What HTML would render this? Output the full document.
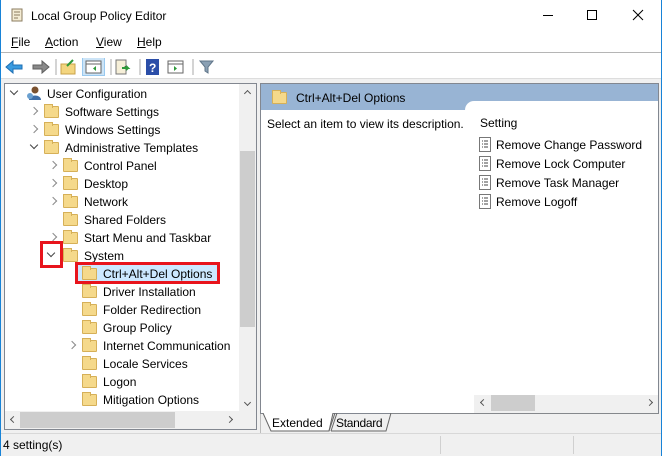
<!DOCTYPE html>
<html><head><meta charset="utf-8"><style>
*{margin:0;padding:0;box-sizing:border-box}
body{width:662px;height:456px;overflow:hidden;background:#f0f0f0;font-family:"Liberation Sans",sans-serif;font-size:12px;color:#000;position:relative}
.a{position:absolute}
.win{left:0;top:0;width:662px;height:456px;border:1px solid #1883d7;border-bottom:none}
.t{white-space:nowrap;line-height:14px}
.fold{position:absolute;width:15px;height:12px;background:#f5d98b;border:1px solid #d6b058;border-radius:1px}
.fold:before{content:"";position:absolute;left:-1px;top:-3px;width:7px;height:3px;background:#f5d98b;border:1px solid #d6b058;border-bottom:none}
.chev{position:absolute;width:6px;height:6px;border-right:1.5px solid #8a8a8a;border-bottom:1.5px solid #8a8a8a}
.r{transform:rotate(-45deg)}
.d{transform:rotate(45deg);border-color:#444}
</style></head><body>
<div class="a win"></div>
<div class="a" style="left:1px;top:0;width:660px;height:31px;background:#fff"></div>
<svg class="a" style="left:9px;top:7px" width="16" height="16"><path d="M3 2h10v12H3z" fill="#f4ecd4" stroke="#8b7d60"/><path d="M5 5h6M5 8h6M5 11h4" stroke="#8b7d60"/></svg>
<div class="a t" style="left:31px;top:9px;font-size:12px">Local Group Policy Editor</div>
<div class="a" style="left:543px;top:15px;width:10px;height:1px;background:#000"></div>
<div class="a" style="left:587px;top:10px;width:10px;height:10px;border:1px solid #000"></div>
<svg class="a" style="left:632px;top:9px" width="12" height="12"><path d="M1 1L11 11M11 1L1 11" stroke="#000"/></svg>
<div class="a" style="left:1px;top:31px;width:660px;height:22px;background:#fff;border-bottom:1px solid #b5b5b5"></div>
<div class="a t" style="left:11px;top:35px"><u>F</u>ile</div>
<div class="a t" style="left:45px;top:35px"><u>A</u>ction</div>
<div class="a t" style="left:96px;top:35px"><u>V</u>iew</div>
<div class="a t" style="left:137px;top:35px"><u>H</u>elp</div>
<div class="a" style="left:1px;top:53px;width:660px;height:26px;background:#fff;border-bottom:1px solid #ddd"></div>
<svg class="a" style="left:5px;top:58px" width="210" height="18">
<path d="M1 9l7-6v4h9v4H8v4z" fill="#3a9be0" stroke="#1e6fb3"/>
<path d="M44 9l-7-6v4h-9v4h9v4z" fill="#8a8a8a" stroke="#5f5f5f"/>
<path d="M51 1v16" stroke="#aaa"/>
<path d="M56 6h14v10H56z" fill="#f3d57f" stroke="#c8a24a"/><path d="M62 8l6-6" stroke="#2e9a3a" stroke-width="2"/>
<rect x="77.5" y="-0.5" width="22" height="18" fill="#cce4f7" stroke="#99c9ef"/>
<path d="M81 3h15v12H81z" fill="#fff" stroke="#666"/><path d="M81 6h15" stroke="#666"/><path d="M91 8v5l-3-2.5z" fill="#2e9a3a"/>
<path d="M106 1v16" stroke="#aaa"/>
<path d="M111 2h10v14h-10z" fill="#f6efd8" stroke="#777"/><path d="M117 10h6l-2-2m2 2l-2 2" stroke="#2e9a3a" stroke-width="2"/>
<path d="M135 1v16" stroke="#aaa"/>
<rect x="141" y="1" width="13" height="16" fill="#2b4ea8"/><text x="144" y="14" fill="#fff" font-size="12" font-weight="bold" font-family="Liberation Sans">?</text>
<path d="M163 3h15v12h-15z" fill="#fff" stroke="#666"/><path d="M163 6h15" stroke="#666"/><path d="M169 8v5l3-2.5z" fill="#2e9a3a"/>
<path d="M188 1v16" stroke="#aaa"/>
<path d="M195 3h13l-5 6v6l-3-2V9z" fill="#8aa0b4" stroke="#5f7488"/>
</svg>
<div class="a" style="left:4px;top:83px;width:253px;height:347px;background:#fff;border:1px solid #828790"></div>
<div class="a" style="left:239px;top:84px;width:17px;height:327px;background:#f0f0f0"></div>
<div class="a" style="left:240px;top:151px;width:15px;height:176px;background:#cdcdcd"></div>
<div class="a chev" style="left:245px;top:91px;transform:rotate(-135deg);border-color:#555;width:5px;height:5px"></div>
<div class="a chev" style="left:245px;top:400px;transform:rotate(45deg);border-color:#555;width:5px;height:5px"></div>
<div class="a" style="left:5px;top:411px;width:251px;height:18px;background:#f0f0f0"></div>
<div class="a" style="left:20px;top:412px;width:155px;height:16px;background:#cdcdcd"></div>
<div class="a chev" style="left:11px;top:417px;transform:rotate(135deg);border-color:#555;width:5px;height:5px"></div>
<div class="a chev" style="left:227px;top:417px;transform:rotate(-45deg);border-color:#555;width:5px;height:5px"></div>
<div class="a chev d" style="left:11px;top:88px"></div>
<svg class="a" style="left:26px;top:85px" width="16" height="16"><circle cx="9" cy="5" r="3.5" fill="#7a5230"/><path d="M3 15c0-6 12-6 12 0z" fill="#3f6fa8"/><circle cx="4" cy="11" r="3" fill="#6aa0d0"/></svg>
<div class="a t" style="left:47px;top:87px">User Configuration</div>
<div class="a chev r" style="left:31px;top:108px"></div><div class="fold" style="left:44px;top:106px"></div><div class="a t" style="left:65px;top:105px">Software Settings</div>
<div class="a chev r" style="left:31px;top:126px"></div><div class="fold" style="left:44px;top:124px"></div><div class="a t" style="left:65px;top:123px">Windows Settings</div>
<div class="a chev d" style="left:31px;top:142px"></div><div class="fold" style="left:44px;top:142px"></div><div class="a t" style="left:65px;top:141px">Administrative Templates</div>
<div class="a chev r" style="left:50px;top:162px"></div><div class="fold" style="left:63px;top:160px"></div><div class="a t" style="left:84px;top:159px">Control Panel</div>
<div class="a chev r" style="left:50px;top:180px"></div><div class="fold" style="left:63px;top:178px"></div><div class="a t" style="left:84px;top:177px">Desktop</div>
<div class="a chev r" style="left:50px;top:198px"></div><div class="fold" style="left:63px;top:196px"></div><div class="a t" style="left:84px;top:195px">Network</div>
<div class="fold" style="left:63px;top:214px"></div><div class="a t" style="left:84px;top:213px">Shared Folders</div>
<div class="a chev r" style="left:50px;top:234px"></div><div class="fold" style="left:63px;top:232px"></div><div class="a t" style="left:84px;top:231px">Start Menu and Taskbar</div>
<div class="a chev d" style="left:48px;top:250px"></div><div class="fold" style="left:63px;top:250px"></div><div class="a t" style="left:84px;top:249px">System</div>
<div class="a" style="left:40px;top:241px;width:23px;height:27px;border:3px solid #e8141c"></div>
<div class="a" style="left:78px;top:264px;width:140px;height:18px;background:#cce8ff"></div>
<div class="a" style="left:75px;top:262px;width:145px;height:22px;border:3px solid #e8141c"></div>
<div class="fold" style="left:82px;top:268px"></div><div class="a t" style="left:103px;top:267px">Ctrl+Alt+Del Options</div>
<div class="fold" style="left:82px;top:286px"></div><div class="a t" style="left:103px;top:285px">Driver Installation</div>
<div class="fold" style="left:82px;top:304px"></div><div class="a t" style="left:103px;top:303px">Folder Redirection</div>
<div class="fold" style="left:82px;top:322px"></div><div class="a t" style="left:103px;top:321px">Group Policy</div>
<div class="a chev r" style="left:69px;top:342px"></div><div class="fold" style="left:82px;top:340px"></div><div class="a t" style="left:103px;top:339px">Internet Communication</div>
<div class="fold" style="left:82px;top:358px"></div><div class="a t" style="left:103px;top:357px">Locale Services</div>
<div class="fold" style="left:82px;top:376px"></div><div class="a t" style="left:103px;top:375px">Logon</div>
<div class="fold" style="left:82px;top:394px"></div><div class="a t" style="left:103px;top:393px">Mitigation Options</div>
<div class="a" style="left:260px;top:83px;width:399px;height:331px;background:#fff;border:1px solid #828790"></div>
<div class="a" style="left:261px;top:84px;width:397px;height:26px;background:#98b4d4"></div>
<div class="a" style="left:465px;top:101px;width:193px;height:12px;background:#fff;border-top-left-radius:9px"></div>
<div class="fold" style="left:272px;top:92px"></div>
<div class="a t" style="left:296px;top:91px">Ctrl+Alt+Del Options</div>
<div class="a t" style="left:267px;top:117px">Select an item to view its description.</div>
<div class="a t" style="left:480px;top:116px">Setting</div>
<svg class="a" style="left:479px;top:137px" width="13" height="76">
<g fill="#fff" stroke="#777"><rect x="0.5" y="0.5" width="11" height="14"/><rect x="0.5" y="19.5" width="11" height="14"/><rect x="0.5" y="38.5" width="11" height="14"/><rect x="0.5" y="57.5" width="11" height="14"/></g>
<g stroke="#444"><path d="M3 4h1M3 7h1M3 10h1M5 4h4M5 7h4M5 10h4"/><path d="M3 23h1M3 26h1M3 29h1M5 23h4M5 26h4M5 29h4"/><path d="M3 42h1M3 45h1M3 48h1M5 42h4M5 45h4M5 48h4"/><path d="M3 61h1M3 64h1M3 67h1M5 61h4M5 64h4M5 67h4"/></g></svg>
<div class="a t" style="left:496px;top:138px">Remove Change Password</div>
<div class="a t" style="left:496px;top:157px">Remove Lock Computer</div>
<div class="a t" style="left:496px;top:176px">Remove Task Manager</div>
<div class="a t" style="left:496px;top:195px">Remove Logoff</div>
<div class="a" style="left:474px;top:395px;width:184px;height:18px;background:#f0f0f0"></div>
<div class="a" style="left:491px;top:395px;width:44px;height:16px;background:#cdcdcd"></div>
<div class="a chev" style="left:481px;top:400px;transform:rotate(135deg);border-color:#555;width:5px;height:5px"></div>
<div class="a chev" style="left:647px;top:400px;transform:rotate(-45deg);border-color:#555;width:5px;height:5px"></div>
<svg class="a" style="left:260px;top:413px" width="400" height="20"><path d="M3 0l8 18h58l4-18" fill="#fff" stroke="#666"/><path d="M75 0l-6 18M77 0l-6 18" stroke="#666" fill="none"/><path d="M71 18h55l5-18" stroke="#666" fill="none"/><path d="M131 0H399" stroke="#888"/><path d="M0 0v20" stroke="#888"/></svg>
<div class="a t" style="left:272px;top:416px">Extended</div>
<div class="a t" style="left:336px;top:416px;letter-spacing:-0.3px">Standard</div>
<div class="a" style="left:1px;top:433px;width:660px;height:1px;background:#d8d8d8"></div>
<div class="a" style="left:440px;top:436px;width:1px;height:18px;background:#d0d0d0"></div>
<div class="a" style="left:573px;top:436px;width:1px;height:18px;background:#d0d0d0"></div>
<div class="a t" style="left:3px;top:438px">4 setting(s)</div>
</body></html>
